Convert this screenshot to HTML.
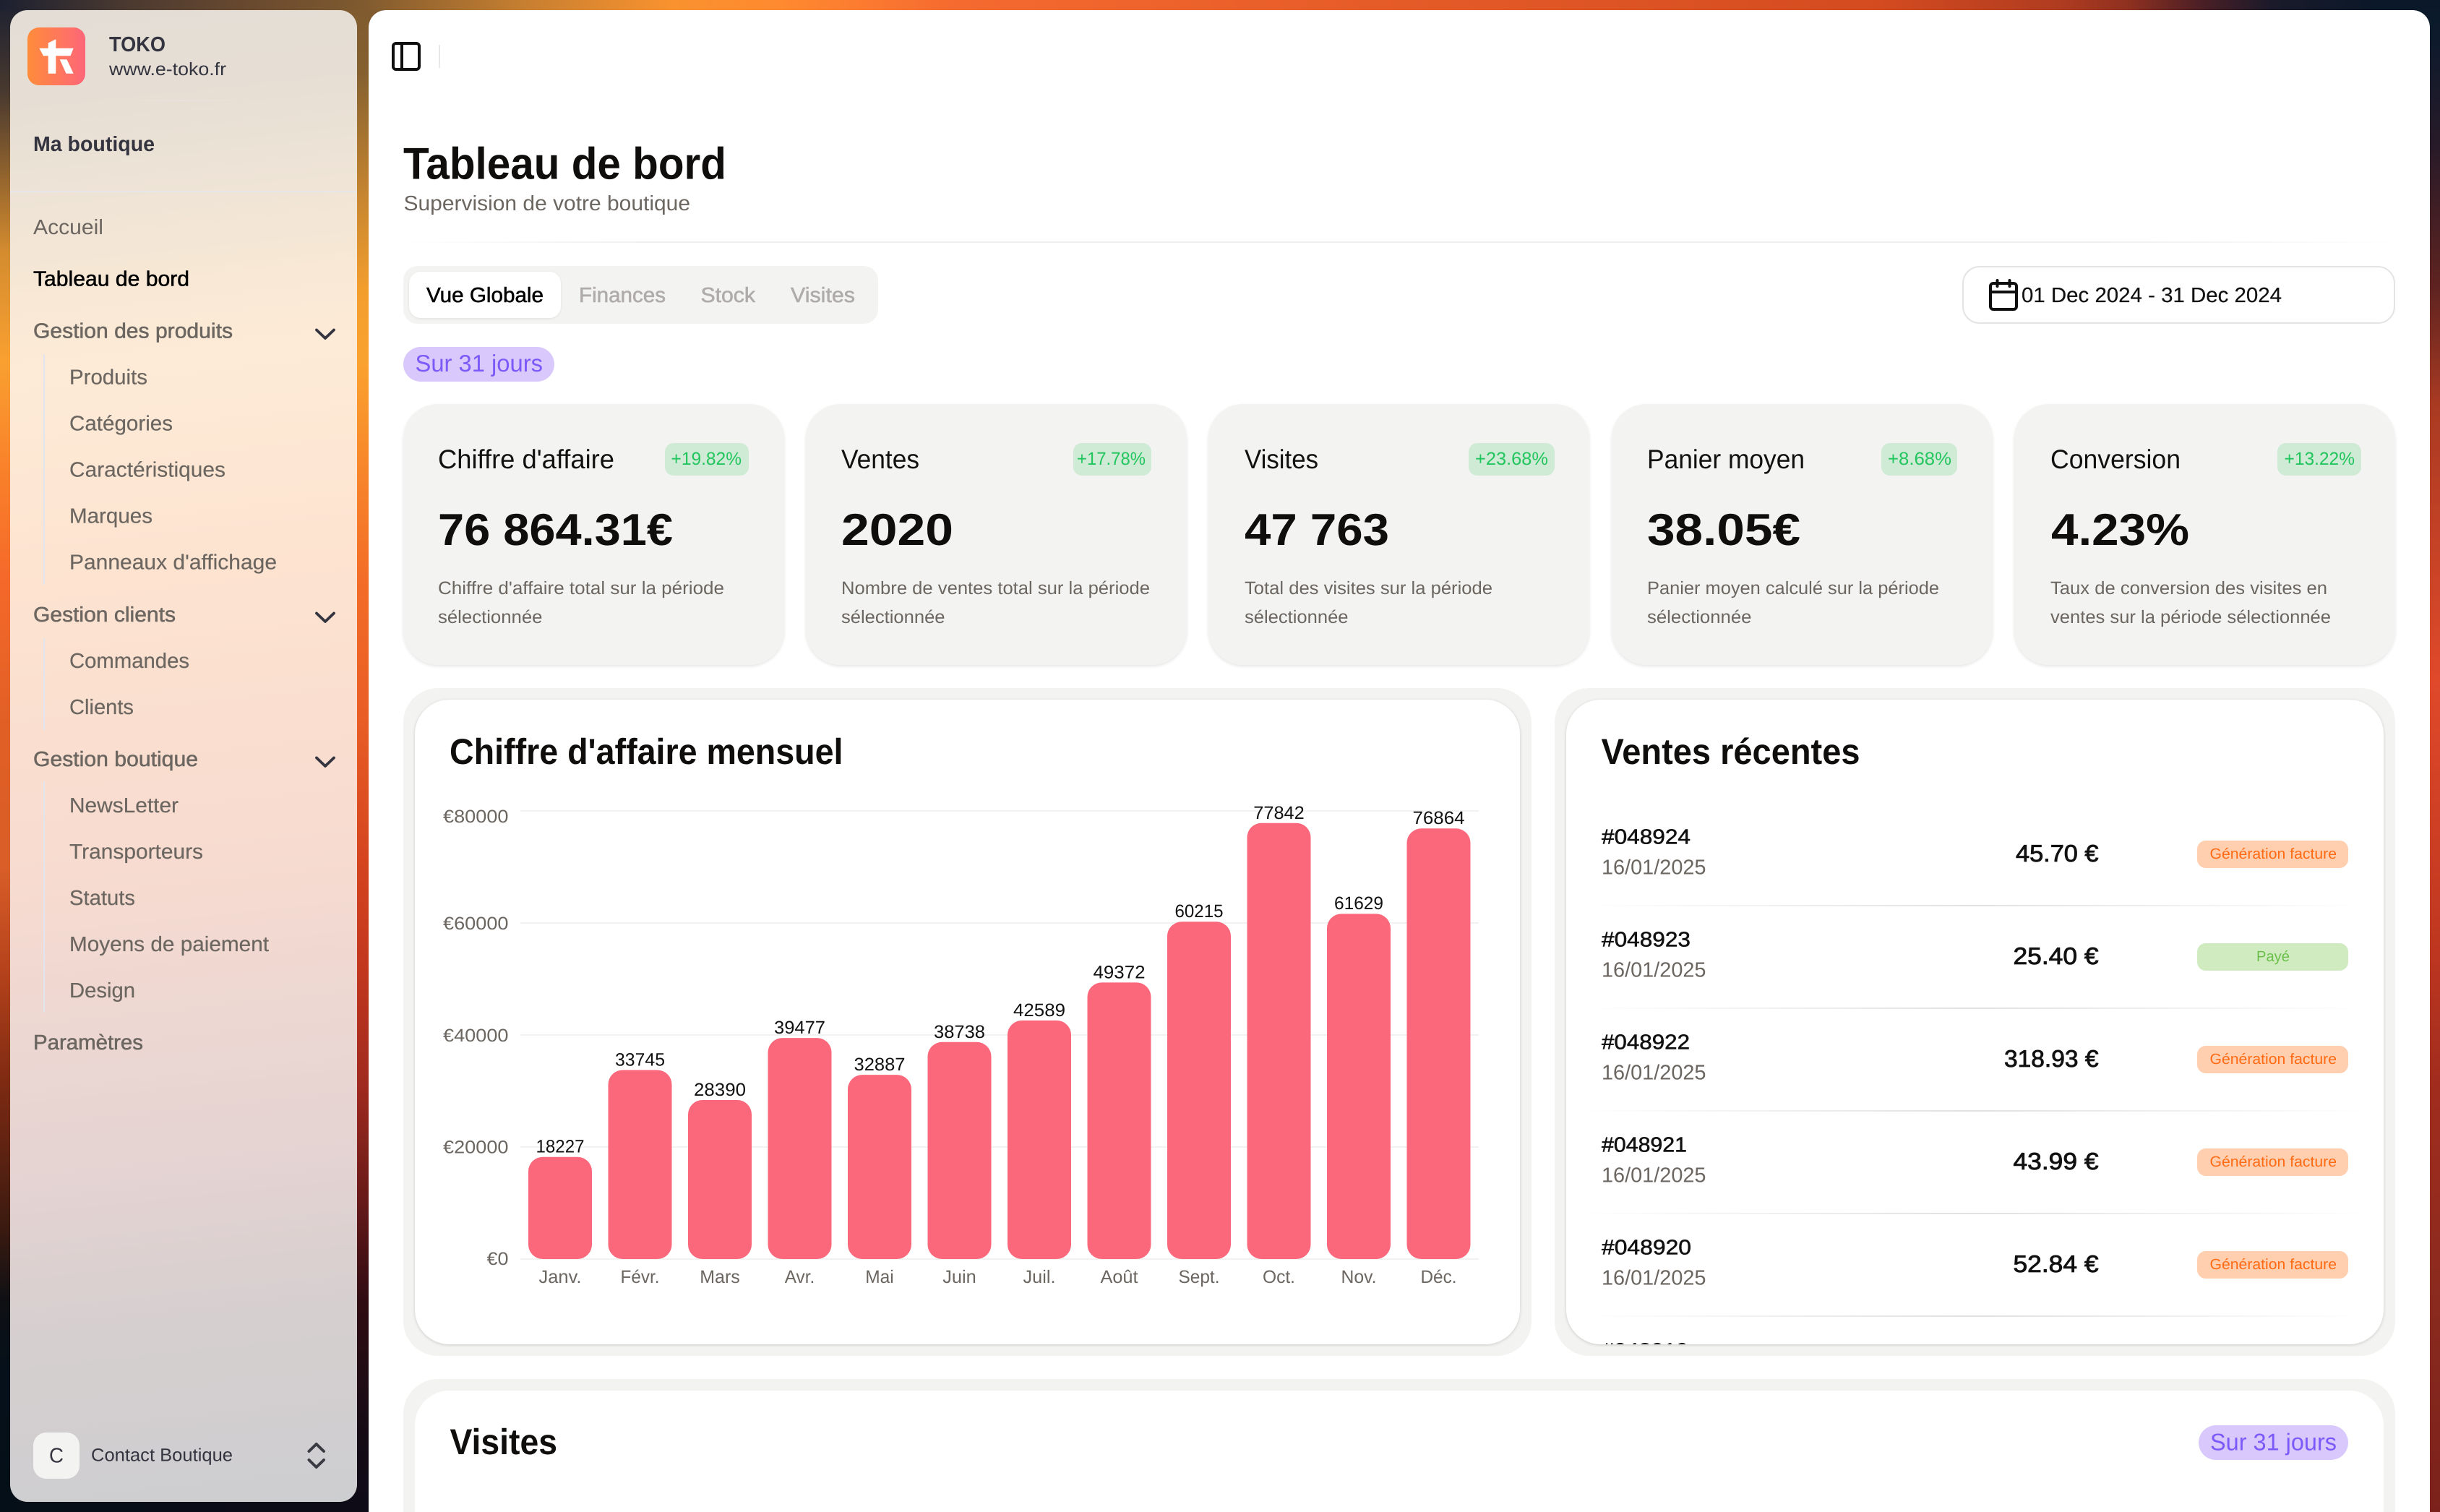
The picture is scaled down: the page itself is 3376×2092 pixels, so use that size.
<!DOCTYPE html>
<html lang="fr">
<head>
<meta charset="utf-8">
<title>Tableau de bord</title>
<style>
html,body{margin:0;padding:0;width:3376px;height:2092px;overflow:hidden;background:#0a0d16}
.a{position:absolute}
#stage{position:relative;width:3376px;height:2092px;overflow:hidden}
svg{position:absolute;left:0;top:0;display:block}
text{font-family:"Liberation Sans",sans-serif;fill:currentColor;color:#111;text-rendering:geometricPrecision;white-space:pre}
.m{stroke:currentColor;stroke-width:.55px}
.h{stroke:currentColor;stroke-width:.85px}
.s{stroke:currentColor;stroke-width:.2px}
.b{font-weight:700}
.f24{font-size:25px}.f28{font-size:29px}.f32{font-size:33px}.f36{font-size:37px}.f48{font-size:50px}.f60{font-size:62px}.f20{font-size:20.5px}
.g{color:#6c6661}.k{color:#33343f}.q{color:#111}.gr{color:#22c55e}.o{color:#ff6a13}.p{color:#7a5af8}.t{color:#aeaba8}
.card{background:#f3f3f1;border-radius:48px;top:559px;height:361px;width:527px;box-shadow:0 2px 4px rgba(0,0,0,.1)}
.pill{background:#cfebd5;border-radius:12px;top:613px;height:45px}
.outer{background:#f3f3f1;border-radius:48px}
.inner{background:#fff;border-radius:48px;box-shadow:0 1px 4px rgba(0,0,0,.16)}
.stat{left:3040px;width:209px;height:38px;border-radius:12px;background:#ffcfb0}
.dv{left:2190px;width:1085px;height:2px;background:linear-gradient(90deg,rgba(225,223,223,0),#e2e0e0 50%,rgba(225,223,223,0))}
</style>
</head>
<body>
<div id="stage">
<!-- background strips -->
<div class="a" style="left:0;top:0;width:40px;height:2092px;background:linear-gradient(180deg,#1c2030 0,#4a3a2f 130px,#a06c2e 265px,#d48c2f 350px,#f9a030 500px,#f97f2a 660px,#f5692a 800px,#e15f25 1000px,#d95e28 1200px,#b3411b 1350px,#7d2a12 1500px,#3a1a10 1700px,#0f1014 1800px,#05101a 1900px,#050f18 2092px)"></div>
<div class="a" style="left:470px;top:0;width:60px;height:2092px;background:linear-gradient(180deg,#7f5a2f 0,#84602f 100px,#c48430 265px,#f29e2d 400px,#faa22f 500px,#f7842a 660px,#f36d28 800px,#e85d25 1000px,#d4431f 1200px,#c0361e 1350px,#a02a1f 1500px,#6b1a19 1650px,#2f0c12 1800px,#130b15 2000px,#0e0b16 2092px)"></div>
<div class="a" style="left:3340px;top:0;width:36px;height:2092px;background:linear-gradient(180deg,#0a1a2a 0,#0c1a2c 50px,#271a28 200px,#5f2320 400px,#a93a22 560px,#e0492a 940px,#c03720 1300px,#a12c1e 1500px,#8a2a1e 1800px,#7b211b 2092px)"></div>
<div class="a" style="left:0;top:0;width:3376px;height:14px;background:linear-gradient(90deg,#1c2030 0,#4c3a30 180px,#6a4a2f 350px,#7f5a2f 500px,#c67f30 724px,#f9922f 928px,#ff8a2f 1081px,#fc7c30 1183px,#f56a2f 1320px,#d44b20 2600px,#b03c20 2847px,#8e3020 2946px,#4b1f25 3045px,#1a1a2a 3144px,#0a1829 3293px,#0a1829 3376px)"></div>
<div class="a" style="left:0;top:2078px;width:510px;height:14px;background:linear-gradient(90deg,#050f18,#0e0b16)"></div>

<!-- sidebar -->
<div class="a" style="left:14px;top:14px;width:480px;height:2064px;border-radius:24px;background:linear-gradient(174deg,#e3ddd6 0,#e6ded4 6%,#ede3d6 12%,#f8e8d5 19%,#fdebd7 24%,#fde3d0 38%,#f7dbd0 57%,#ead6d2 70%,#e4d3d2 77%,#d6cfcf 87%,#cdced0 100%)"></div>
<div class="a" style="left:14px;top:264px;width:480px;height:2px;background:#e6e5ea"></div>
<div class="a" style="left:178px;top:138px;width:150px;height:2px;background:linear-gradient(90deg,rgba(232,232,238,.1),rgba(232,232,238,.4) 50%,rgba(232,232,238,.1))"></div>
<div class="a" style="left:38px;top:38px;width:80px;height:80px;border-radius:16px;background:linear-gradient(90deg,#ff8c3a,#fd6679)"></div>
<div class="a" style="left:60px;top:490px;width:2px;height:319px;background:#e2e5ed"></div>
<div class="a" style="left:60px;top:883px;width:2px;height:127px;background:#e2e5ed"></div>
<div class="a" style="left:60px;top:1081px;width:2px;height:320px;background:#e2e5ed"></div>
<div class="a" style="left:46px;top:1982px;width:64px;height:64px;border-radius:18px;background:#f3f3f1"></div>

<!-- main -->
<div class="a" style="left:510px;top:14px;width:2852px;height:2078px;background:#fff;border-radius:24px 24px 0 0"></div>
<div class="a" style="left:607px;top:62px;width:2px;height:32px;background:#e8e8e6"></div>
<div class="a" style="left:558px;top:334px;width:2762px;height:2px;background:linear-gradient(90deg,rgba(240,240,238,0),#f0f0ee 12%,#f0f0ee 85%,rgba(240,240,238,0))"></div>
<div class="a" style="left:558px;top:368px;width:657px;height:80px;border-radius:20px;background:#f3f3f1"></div>
<div class="a" style="left:566px;top:376px;width:210px;height:64px;border-radius:16px;background:#fff;box-shadow:0 1px 3px rgba(0,0,0,.08)"></div>
<div class="a" style="left:558px;top:480px;width:209px;height:48px;border-radius:24px;background:#d8c8fb"></div>
<div class="a" style="left:2715px;top:368px;width:595px;height:76px;border:2px solid #e5e3e5;border-radius:24px"></div>

<div class="a card" style="left:558px"></div>
<div class="a card" style="left:1115px"></div>
<div class="a card" style="left:1672px"></div>
<div class="a card" style="left:2230px"></div>
<div class="a card" style="left:2787px"></div>
<div class="a pill" style="left:920px;width:116px"></div>
<div class="a pill" style="left:1485px;width:108px"></div>
<div class="a pill" style="left:2032px;width:119px"></div>
<div class="a pill" style="left:2603px;width:105px"></div>
<div class="a pill" style="left:3151px;width:116px"></div>

<div class="a outer" style="left:558px;top:952px;width:1561px;height:924px"></div>
<div class="a inner" style="left:574px;top:968px;width:1529px;height:892px"></div>
<div class="a outer" style="left:2151px;top:952px;width:1163px;height:924px"></div>
<div class="a inner" style="left:2167px;top:968px;width:1131px;height:892px"></div>
<div class="a outer" style="left:558px;top:1908px;width:2756px;height:184px;border-radius:48px 48px 0 0"></div>
<div class="a" style="left:574px;top:1924px;width:2724px;height:168px;background:#fff;border-radius:48px 48px 0 0"></div>

<div class="a dv" style="top:1252px"></div>
<div class="a dv" style="top:1394px"></div>
<div class="a dv" style="top:1536px"></div>
<div class="a dv" style="top:1678px"></div>
<div class="a dv" style="top:1820px"></div>
<div class="a stat" style="top:1163px"></div>
<div class="a stat" style="top:1305px;background:#d0ebc0"></div>
<div class="a stat" style="top:1447px"></div>
<div class="a stat" style="top:1589px"></div>
<div class="a stat" style="top:1731px"></div>
<div class="a" style="left:3042px;top:1972px;width:207px;height:48px;border-radius:24px;background:#d8c8fb"></div>

<svg width="3376" height="2092" viewBox="0 0 3376 2092" xmlns="http://www.w3.org/2000/svg">
<defs><clipPath id="clip6"><rect x="2167" y="968" width="1131" height="892"/></clipPath></defs>

<!-- logo glyph -->
<g fill="#fff">
<polygon points="66.7,59.5 77.3,54.3 77.3,101.7 66.7,101.7"/>
<polygon points="54.3,66.7 101.7,66.7 97.5,77.3 60,77.3"/>
<polygon points="82.7,82.3 92.5,82.3 101.7,101.7 91.5,101.7"/>
</g>
<text class="f28 b k" x="151" y="71" textLength="78" lengthAdjust="spacingAndGlyphs">TOKO</text>
<text class="f24 k" x="151" y="104" textLength="162" lengthAdjust="spacingAndGlyphs">www.e-toko.fr</text>
<text class="f28 b k" x="46" y="209" textLength="168" lengthAdjust="spacingAndGlyphs">Ma boutique</text>

<!-- nav -->
<text class="f28 g" x="46" y="324" textLength="97" lengthAdjust="spacingAndGlyphs">Accueil</text>
<text class="f28 m" style="color:#000" x="46" y="395.7" textLength="216" lengthAdjust="spacingAndGlyphs">Tableau de bord</text>
<text class="f28 g m" x="46" y="467.3" textLength="276" lengthAdjust="spacingAndGlyphs">Gestion des produits</text>
<text class="f28 g s" x="96" y="531.6" textLength="108" lengthAdjust="spacingAndGlyphs">Produits</text>
<text class="f28 g s" x="96" y="595.6" textLength="143" lengthAdjust="spacingAndGlyphs">Catégories</text>
<text class="f28 g s" x="96" y="659.6" textLength="216" lengthAdjust="spacingAndGlyphs">Caractéristiques</text>
<text class="f28 g s" x="96" y="723.6" textLength="115" lengthAdjust="spacingAndGlyphs">Marques</text>
<text class="f28 g s" x="96" y="787.6" textLength="287" lengthAdjust="spacingAndGlyphs">Panneaux d'affichage</text>
<text class="f28 g m" x="46" y="860" textLength="197" lengthAdjust="spacingAndGlyphs">Gestion clients</text>
<text class="f28 g s" x="96" y="924" textLength="166" lengthAdjust="spacingAndGlyphs">Commandes</text>
<text class="f28 g s" x="96" y="988" textLength="89" lengthAdjust="spacingAndGlyphs">Clients</text>
<text class="f28 g m" x="46" y="1060" textLength="228" lengthAdjust="spacingAndGlyphs">Gestion boutique</text>
<text class="f28 g s" x="96" y="1124" textLength="151" lengthAdjust="spacingAndGlyphs">NewsLetter</text>
<text class="f28 g s" x="96" y="1188" textLength="185" lengthAdjust="spacingAndGlyphs">Transporteurs</text>
<text class="f28 g s" x="96" y="1252" textLength="91" lengthAdjust="spacingAndGlyphs">Statuts</text>
<text class="f28 g s" x="96" y="1316" textLength="276" lengthAdjust="spacingAndGlyphs">Moyens de paiement</text>
<text class="f28 g s" x="96" y="1380" textLength="91" lengthAdjust="spacingAndGlyphs">Design</text>
<text class="f28 g m" x="46" y="1452" textLength="152" lengthAdjust="spacingAndGlyphs">Paramètres</text>
<g fill="none" stroke="#33343f" stroke-width="3.8" stroke-linecap="round" stroke-linejoin="round">
<path d="M438 456.5 L450 468 L462 456.5"/>
<path d="M438 848.5 L450 860 L462 848.5"/>
<path d="M438 1048.5 L450 1060 L462 1048.5"/>
<path d="M427.5 2008 L437.7 1998 L448 2008" stroke="#3a3a42" stroke-width="4"/>
<path d="M427.5 2020 L437.7 2030 L448 2020" stroke="#3a3a42" stroke-width="4"/>
</g>
<text class="f28 k" x="68" y="2023.5" textLength="20" lengthAdjust="spacingAndGlyphs">C</text>
<text class="f24 k" x="126" y="2021.7" textLength="196" lengthAdjust="spacingAndGlyphs">Contact Boutique</text>

<!-- top bar icons -->
<g fill="none" stroke="#0f0f0f" stroke-width="4" stroke-linecap="round" stroke-linejoin="round">
<rect x="544" y="60" width="36" height="36" rx="4"/>
<path d="M556 60V96"/>
<rect x="2754" y="392" width="36" height="36" rx="4"/>
<path d="M2763.5 388V396M2780.5 388V396M2754 404H2790"/>
</g>

<!-- header -->
<text class="f60 b" style="color:#0f0e0c" x="558" y="247.5" textLength="447" lengthAdjust="spacingAndGlyphs">Tableau de bord</text>
<text class="f28 g" x="558.5" y="291" textLength="396.5" lengthAdjust="spacingAndGlyphs">Supervision de votre boutique</text>

<text class="f28 m" style="color:#000" x="590" y="418" textLength="162" lengthAdjust="spacingAndGlyphs">Vue Globale</text>
<text class="f28 t m" x="801" y="418" textLength="120" lengthAdjust="spacingAndGlyphs">Finances</text>
<text class="f28 t m" x="969.5" y="418" textLength="75.5" lengthAdjust="spacingAndGlyphs">Stock</text>
<text class="f28 t m" x="1094" y="418" textLength="89" lengthAdjust="spacingAndGlyphs">Visites</text>
<text class="f28 s q" x="2797" y="418" textLength="360" lengthAdjust="spacingAndGlyphs">01 Dec 2024 - 31 Dec 2024</text>
<text class="f32 p" x="574.5" y="514" textLength="176.5" lengthAdjust="spacingAndGlyphs">Sur 31 jours</text>

<!-- stat cards -->
<text class="f36 q" x="606" y="648" textLength="244" lengthAdjust="spacingAndGlyphs">Chiffre d'affaire</text>
<text class="f24 gr" x="928.5" y="643" textLength="97.5" lengthAdjust="spacingAndGlyphs">+19.82%</text>
<text class="f60 b" style="color:#0f0e0c" x="606" y="754" textLength="325" lengthAdjust="spacingAndGlyphs">76 864.31€</text>
<text class="f24 g" x="606" y="822" textLength="396" lengthAdjust="spacingAndGlyphs">Chiffre d'affaire total sur la période</text>
<text class="f24 g" x="606" y="862" textLength="144.5" lengthAdjust="spacingAndGlyphs">sélectionnée</text>

<text class="f36 q" x="1164" y="648" textLength="108" lengthAdjust="spacingAndGlyphs">Ventes</text>
<text class="f24 gr" x="1490" y="643" textLength="95" lengthAdjust="spacingAndGlyphs">+17.78%</text>
<text class="f60 b" style="color:#0f0e0c" x="1164" y="754" textLength="155" lengthAdjust="spacingAndGlyphs">2020</text>
<text class="f24 g" x="1164" y="822" textLength="427" lengthAdjust="spacingAndGlyphs">Nombre de ventes total sur la période</text>
<text class="f24 g" x="1164" y="862" textLength="143.5" lengthAdjust="spacingAndGlyphs">sélectionnée</text>

<text class="f36 q" x="1722" y="648" textLength="102" lengthAdjust="spacingAndGlyphs">Visites</text>
<text class="f24 gr" x="2041" y="643" textLength="101" lengthAdjust="spacingAndGlyphs">+23.68%</text>
<text class="f60 b" style="color:#0f0e0c" x="1722" y="754" textLength="200" lengthAdjust="spacingAndGlyphs">47 763</text>
<text class="f24 g" x="1722" y="822" textLength="343" lengthAdjust="spacingAndGlyphs">Total des visites sur la période</text>
<text class="f24 g" x="1722" y="862" textLength="143.5" lengthAdjust="spacingAndGlyphs">sélectionnée</text>

<text class="f36 q" x="2279" y="648" textLength="218" lengthAdjust="spacingAndGlyphs">Panier moyen</text>
<text class="f24 gr" x="2612" y="643" textLength="88" lengthAdjust="spacingAndGlyphs">+8.68%</text>
<text class="f60 b" style="color:#0f0e0c" x="2279" y="754" textLength="212" lengthAdjust="spacingAndGlyphs">38.05€</text>
<text class="f24 g" x="2279" y="822" textLength="404" lengthAdjust="spacingAndGlyphs">Panier moyen calculé sur la période</text>
<text class="f24 g" x="2279" y="862" textLength="144.5" lengthAdjust="spacingAndGlyphs">sélectionnée</text>

<text class="f36 q" x="2837" y="648" textLength="180" lengthAdjust="spacingAndGlyphs">Conversion</text>
<text class="f24 gr" x="3160.5" y="643" textLength="97.5" lengthAdjust="spacingAndGlyphs">+13.22%</text>
<text class="f60 b" style="color:#0f0e0c" x="2838" y="754" textLength="191" lengthAdjust="spacingAndGlyphs">4.23%</text>
<text class="f24 g" x="2837" y="822" textLength="383" lengthAdjust="spacingAndGlyphs">Taux de conversion des visites en</text>
<text class="f24 g" x="2837" y="862" textLength="388" lengthAdjust="spacingAndGlyphs">ventes sur la période sélectionnée</text>

<!-- chart -->
<text class="f48 b" style="color:#0f0e0c" x="622" y="1057" textLength="544.5" lengthAdjust="spacingAndGlyphs">Chiffre d'affaire mensuel</text>
<g fill="#f2f2f2">
<rect x="720" y="1121" width="1326" height="2"/>
<rect x="720" y="1276" width="1326" height="2"/>
<rect x="720" y="1431" width="1326" height="2"/>
<rect x="720" y="1586" width="1326" height="2"/>
<rect x="720" y="1741" width="1326" height="2"/>
</g>
<text class="f24 g" x="703.5" y="1138" text-anchor="end" textLength="90.5" lengthAdjust="spacingAndGlyphs">€80000</text>
<text class="f24 g" x="703.5" y="1286" text-anchor="end" textLength="90.5" lengthAdjust="spacingAndGlyphs">€60000</text>
<text class="f24 g" x="703.5" y="1441" text-anchor="end" textLength="90.5" lengthAdjust="spacingAndGlyphs">€40000</text>
<text class="f24 g" x="703.5" y="1595.5" text-anchor="end" textLength="90.5" lengthAdjust="spacingAndGlyphs">€20000</text>
<text class="f24 g" x="703.5" y="1750" text-anchor="end" textLength="30" lengthAdjust="spacingAndGlyphs">€0</text>
<g fill="#fb687c">
<rect x="731" y="1600.7" width="88" height="141.3" rx="20"/>
<rect x="841.5" y="1480.5" width="88" height="261.5" rx="20"/>
<rect x="952" y="1522" width="88" height="220" rx="20"/>
<rect x="1062.5" y="1436.1" width="88" height="305.9" rx="20"/>
<rect x="1173" y="1487.1" width="88" height="254.9" rx="20"/>
<rect x="1283.5" y="1441.8" width="88" height="300.2" rx="20"/>
<rect x="1394" y="1411.9" width="88" height="330.1" rx="20"/>
<rect x="1504.5" y="1359.4" width="88" height="382.6" rx="20"/>
<rect x="1615" y="1275.3" width="88" height="466.7" rx="20"/>
<rect x="1725.5" y="1138.7" width="88" height="603.3" rx="20"/>
<rect x="1836" y="1264.4" width="88" height="477.6" rx="20"/>
<rect x="1946.5" y="1146.3" width="88" height="595.7" rx="20"/>
</g>
<text class="f24 q" text-anchor="middle" x="775" y="1594.5" textLength="67" lengthAdjust="spacingAndGlyphs">18227</text>
<text class="f24 q" text-anchor="middle" x="885.5" y="1474.5" textLength="69" lengthAdjust="spacingAndGlyphs">33745</text>
<text class="f24 q" text-anchor="middle" x="996" y="1516" textLength="72" lengthAdjust="spacingAndGlyphs">28390</text>
<text class="f24 q" text-anchor="middle" x="1106.5" y="1430" textLength="71" lengthAdjust="spacingAndGlyphs">39477</text>
<text class="f24 q" text-anchor="middle" x="1217" y="1481" textLength="71" lengthAdjust="spacingAndGlyphs">32887</text>
<text class="f24 q" text-anchor="middle" x="1327.5" y="1435.8" textLength="71" lengthAdjust="spacingAndGlyphs">38738</text>
<text class="f24 q" text-anchor="middle" x="1438" y="1406" textLength="72" lengthAdjust="spacingAndGlyphs">42589</text>
<text class="f24 q" text-anchor="middle" x="1548.5" y="1353.4" textLength="72" lengthAdjust="spacingAndGlyphs">49372</text>
<text class="f24 q" text-anchor="middle" x="1659" y="1269" textLength="67" lengthAdjust="spacingAndGlyphs">60215</text>
<text class="f24 q" text-anchor="middle" x="1769.5" y="1133" textLength="70.5" lengthAdjust="spacingAndGlyphs">77842</text>
<text class="f24 q" text-anchor="middle" x="1880" y="1258" textLength="68" lengthAdjust="spacingAndGlyphs">61629</text>
<text class="f24 q" text-anchor="middle" x="1990.5" y="1140" textLength="72" lengthAdjust="spacingAndGlyphs">76864</text>
<text class="f24 g" text-anchor="middle" x="775" y="1775" textLength="59" lengthAdjust="spacingAndGlyphs">Janv.</text>
<text class="f24 g" text-anchor="middle" x="885.5" y="1775" textLength="54" lengthAdjust="spacingAndGlyphs">Févr.</text>
<text class="f24 g" text-anchor="middle" x="996" y="1775" textLength="55.5" lengthAdjust="spacingAndGlyphs">Mars</text>
<text class="f24 g" text-anchor="middle" x="1106.5" y="1775" textLength="41.5" lengthAdjust="spacingAndGlyphs">Avr.</text>
<text class="f24 g" text-anchor="middle" x="1217" y="1775" textLength="39.5" lengthAdjust="spacingAndGlyphs">Mai</text>
<text class="f24 g" text-anchor="middle" x="1327.5" y="1775" textLength="46.5" lengthAdjust="spacingAndGlyphs">Juin</text>
<text class="f24 g" text-anchor="middle" x="1438" y="1775" textLength="45" lengthAdjust="spacingAndGlyphs">Juil.</text>
<text class="f24 g" text-anchor="middle" x="1548.5" y="1775" textLength="52" lengthAdjust="spacingAndGlyphs">Août</text>
<text class="f24 g" text-anchor="middle" x="1659" y="1775" textLength="57" lengthAdjust="spacingAndGlyphs">Sept.</text>
<text class="f24 g" text-anchor="middle" x="1769.5" y="1775" textLength="45" lengthAdjust="spacingAndGlyphs">Oct.</text>
<text class="f24 g" text-anchor="middle" x="1880" y="1775" textLength="49" lengthAdjust="spacingAndGlyphs">Nov.</text>
<text class="f24 g" text-anchor="middle" x="1990.5" y="1775" textLength="50" lengthAdjust="spacingAndGlyphs">Déc.</text>

<!-- recent sales -->
<text class="f48 b" style="color:#0f0e0c" x="2215.5" y="1057" textLength="358" lengthAdjust="spacingAndGlyphs">Ventes récentes</text>

<text class="f28 q m" x="2216" y="1167.5" textLength="123" lengthAdjust="spacingAndGlyphs">#048924</text>
<text class="f28 g" x="2216" y="1209.6" textLength="144.5" lengthAdjust="spacingAndGlyphs">16/01/2025</text>
<text class="f32 q h" x="2903.5" y="1192" text-anchor="end" textLength="114.5" lengthAdjust="spacingAndGlyphs">45.70 €</text>
<text class="f20 o" x="3233" y="1188" text-anchor="end" textLength="175.5" lengthAdjust="spacingAndGlyphs">Génération facture</text>

<text class="f28 q m" x="2216" y="1309.5" textLength="123" lengthAdjust="spacingAndGlyphs">#048923</text>
<text class="f28 g" x="2216" y="1351.6" textLength="144.5" lengthAdjust="spacingAndGlyphs">16/01/2025</text>
<text class="f32 q h" x="2903.5" y="1334" text-anchor="end" textLength="118" lengthAdjust="spacingAndGlyphs">25.40 €</text>
<text class="f20" style="color:#6cc04a" x="3122" y="1330" textLength="46" lengthAdjust="spacingAndGlyphs">Payé</text>

<text class="f28 q m" x="2216" y="1451.5" textLength="122" lengthAdjust="spacingAndGlyphs">#048922</text>
<text class="f28 g" x="2216" y="1493.6" textLength="144.5" lengthAdjust="spacingAndGlyphs">16/01/2025</text>
<text class="f32 q h" x="2903.5" y="1476" text-anchor="end" textLength="130.5" lengthAdjust="spacingAndGlyphs">318.93 €</text>
<text class="f20 o" x="3233" y="1472" text-anchor="end" textLength="175.5" lengthAdjust="spacingAndGlyphs">Génération facture</text>

<text class="f28 q m" x="2216" y="1593.5" textLength="118" lengthAdjust="spacingAndGlyphs">#048921</text>
<text class="f28 g" x="2216" y="1635.6" textLength="144.5" lengthAdjust="spacingAndGlyphs">16/01/2025</text>
<text class="f32 q h" x="2903.5" y="1618" text-anchor="end" textLength="118" lengthAdjust="spacingAndGlyphs">43.99 €</text>
<text class="f20 o" x="3233" y="1614" text-anchor="end" textLength="175.5" lengthAdjust="spacingAndGlyphs">Génération facture</text>

<text class="f28 q m" x="2216" y="1735.5" textLength="124" lengthAdjust="spacingAndGlyphs">#048920</text>
<text class="f28 g" x="2216" y="1777.6" textLength="144.5" lengthAdjust="spacingAndGlyphs">16/01/2025</text>
<text class="f32 q h" x="2903.5" y="1760" text-anchor="end" textLength="118" lengthAdjust="spacingAndGlyphs">52.84 €</text>
<text class="f20 o" x="3233" y="1756" text-anchor="end" textLength="175.5" lengthAdjust="spacingAndGlyphs">Génération facture</text>

<g clip-path="url(#clip6)">
<text class="f28 q m" x="2216" y="1878.5" textLength="120" lengthAdjust="spacingAndGlyphs">#048919</text>
</g>

<!-- visites -->
<text class="f48 b" style="color:#0f0e0c" x="622.5" y="2012" textLength="148.5" lengthAdjust="spacingAndGlyphs">Visites</text>
<text class="f32 p" x="3058" y="2006.5" textLength="175" lengthAdjust="spacingAndGlyphs">Sur 31 jours</text>
</svg>
</div>
</body>
</html>
